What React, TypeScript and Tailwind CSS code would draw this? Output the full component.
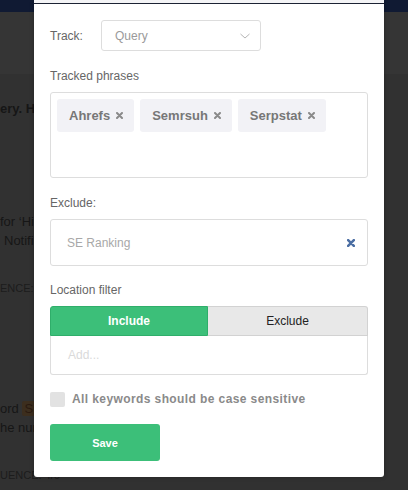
import React from "react";

function XIcon({ color, size = 7, stroke = 2 }: { color: string; size?: number; stroke?: number }) {
  return (
    <svg width={size} height={size} viewBox="0 0 7 7" fill="none">
      <path d="M1 1 L6 6 M6 1 L1 6" stroke={color} strokeWidth={stroke} strokeLinecap="round" />
    </svg>
  );
}

function Chip({ label }: { label: string }) {
  return (
    <div className="flex h-[33px] items-center gap-[6px] rounded-[3px] bg-[#f2f2f6] pl-[12px] pr-[11px] text-[13px] font-bold text-[#777777]">
      <span>{label}</span>
      <XIcon color="#8a8a8a" />
    </div>
  );
}

export default function App() {
  return (
    <div
      className="relative h-[490px] w-[408px] overflow-hidden bg-[#313131]"
      style={{ fontFamily: '"Liberation Sans", Arial, sans-serif' }}
    >
      {/* Background page (dimmed) */}
      <div className="flex flex-col">
        <div className="h-[12px] bg-[#101a33]" />
        <div className="h-[62px] bg-[#353535]" />
        <div className="flex flex-col text-[13px] leading-[19px] text-[#161616]">
          <div className="mt-[25px] whitespace-nowrap font-bold">ery. H</div>
          <div className="mt-[94px] whitespace-nowrap">for ‘Hig</div>
          <div className="ml-[4px] whitespace-nowrap">Notifi</div>
          <div className="mt-[30px] whitespace-nowrap text-[11px] leading-[16px] text-[#1c1c1c]">ENCE: 1</div>
          <div className="mt-[103px] whitespace-nowrap">
            ord <span className="rounded-[2px] bg-[#3c2e1e] px-[2px] text-[#2a1a10]">S</span>
          </div>
          <div className="whitespace-nowrap">he nur</div>
          <div className="mt-[30px] whitespace-nowrap text-[11px] leading-[16px] text-[#1c1c1c]">UENCE: 4/6</div>
        </div>
      </div>

      {/* Modal */}
      <div className="absolute left-[34px] top-0 flex w-[350px] flex-col rounded-b-[3px] bg-white shadow-[0_0_4px_rgba(0,0,0,0.3)]">
        <div className="h-[3px] bg-[#f4f4f6]" />
        <div className="h-px bg-[#1c2233]" />
        <div className="flex flex-col px-[16px] pb-[16px] pt-[16px] text-[12px] leading-[18px]">
          {/* Track */}
          <div className="flex items-center">
            <span className="w-[51px] text-[#666666]">Track:</span>
            <div className="flex h-[31px] w-[160px] items-center justify-between rounded-[3px] border border-[#dddddd] pl-[13px] pr-[9px] text-[#9a9a9a]">
              <span>Query</span>
              <svg width="12" height="8" viewBox="0 0 12 8" fill="none">
                <path d="M1.5 2 L6 6 L10.5 2" stroke="#b5b5b5" strokeWidth="1" />
              </svg>
            </div>
          </div>

          {/* Tracked phrases */}
          <div className="mt-[16px] text-[#666666]">Tracked phrases</div>
          <div className="mt-[7px] flex h-[86px] items-start gap-[6px] rounded-[3px] border border-[#dddddd] p-[6px]">
            <Chip label="Ahrefs" />
            <Chip label="Semrsuh" />
            <Chip label="Serpstat" />
          </div>

          {/* Exclude */}
          <div className="mt-[16px] text-[#666666]">Exclude:</div>
          <div className="mt-[7px] flex h-[47px] items-center justify-between rounded-[3px] border border-[#dddddd] pl-[16px] pr-[12px]">
            <span className="text-[#a8a8a8]">SE Ranking</span>
            <XIcon color="#4b6ea3" size={8} stroke={2.2} />
          </div>

          {/* Location filter */}
          <div className="mt-[15px] text-[#666666]">Location filter</div>
          <div className="mt-[7px] flex flex-col">
            <div className="flex h-[30px]">
              <div className="flex w-[158px] items-center justify-center rounded-tl-[3px] border border-[#2fae6a] bg-[#3cbf79] font-bold text-white">
                Include
              </div>
              <div className="flex flex-1 items-center justify-center rounded-tr-[3px] border border-l-0 border-[#d2d2d2] bg-[#e8e8e8] text-[#222222]">
                Exclude
              </div>
            </div>
            <div className="flex h-[39px] items-center rounded-b-[3px] border border-t-0 border-[#dddddd] pl-[17px] text-[#dadada]">
              Add...
            </div>
          </div>

          {/* Checkbox */}
          <div className="mt-[15px] flex items-center gap-[7px]">
            <div className="h-[15px] w-[15px] rounded-[2px] bg-[#e2e2e2]" />
            <span className="text-[12px] font-bold tracking-[0.4px] text-[#8a8a8a]">
              All keywords should be case sensitive
            </span>
          </div>

          {/* Save */}
          <button className="mt-[16px] flex h-[37px] w-[110px] items-center justify-center rounded-[3px] bg-[#3cbf79] text-[11px] font-bold text-white">
            Save
          </button>
        </div>
      </div>
    </div>
  );
}
